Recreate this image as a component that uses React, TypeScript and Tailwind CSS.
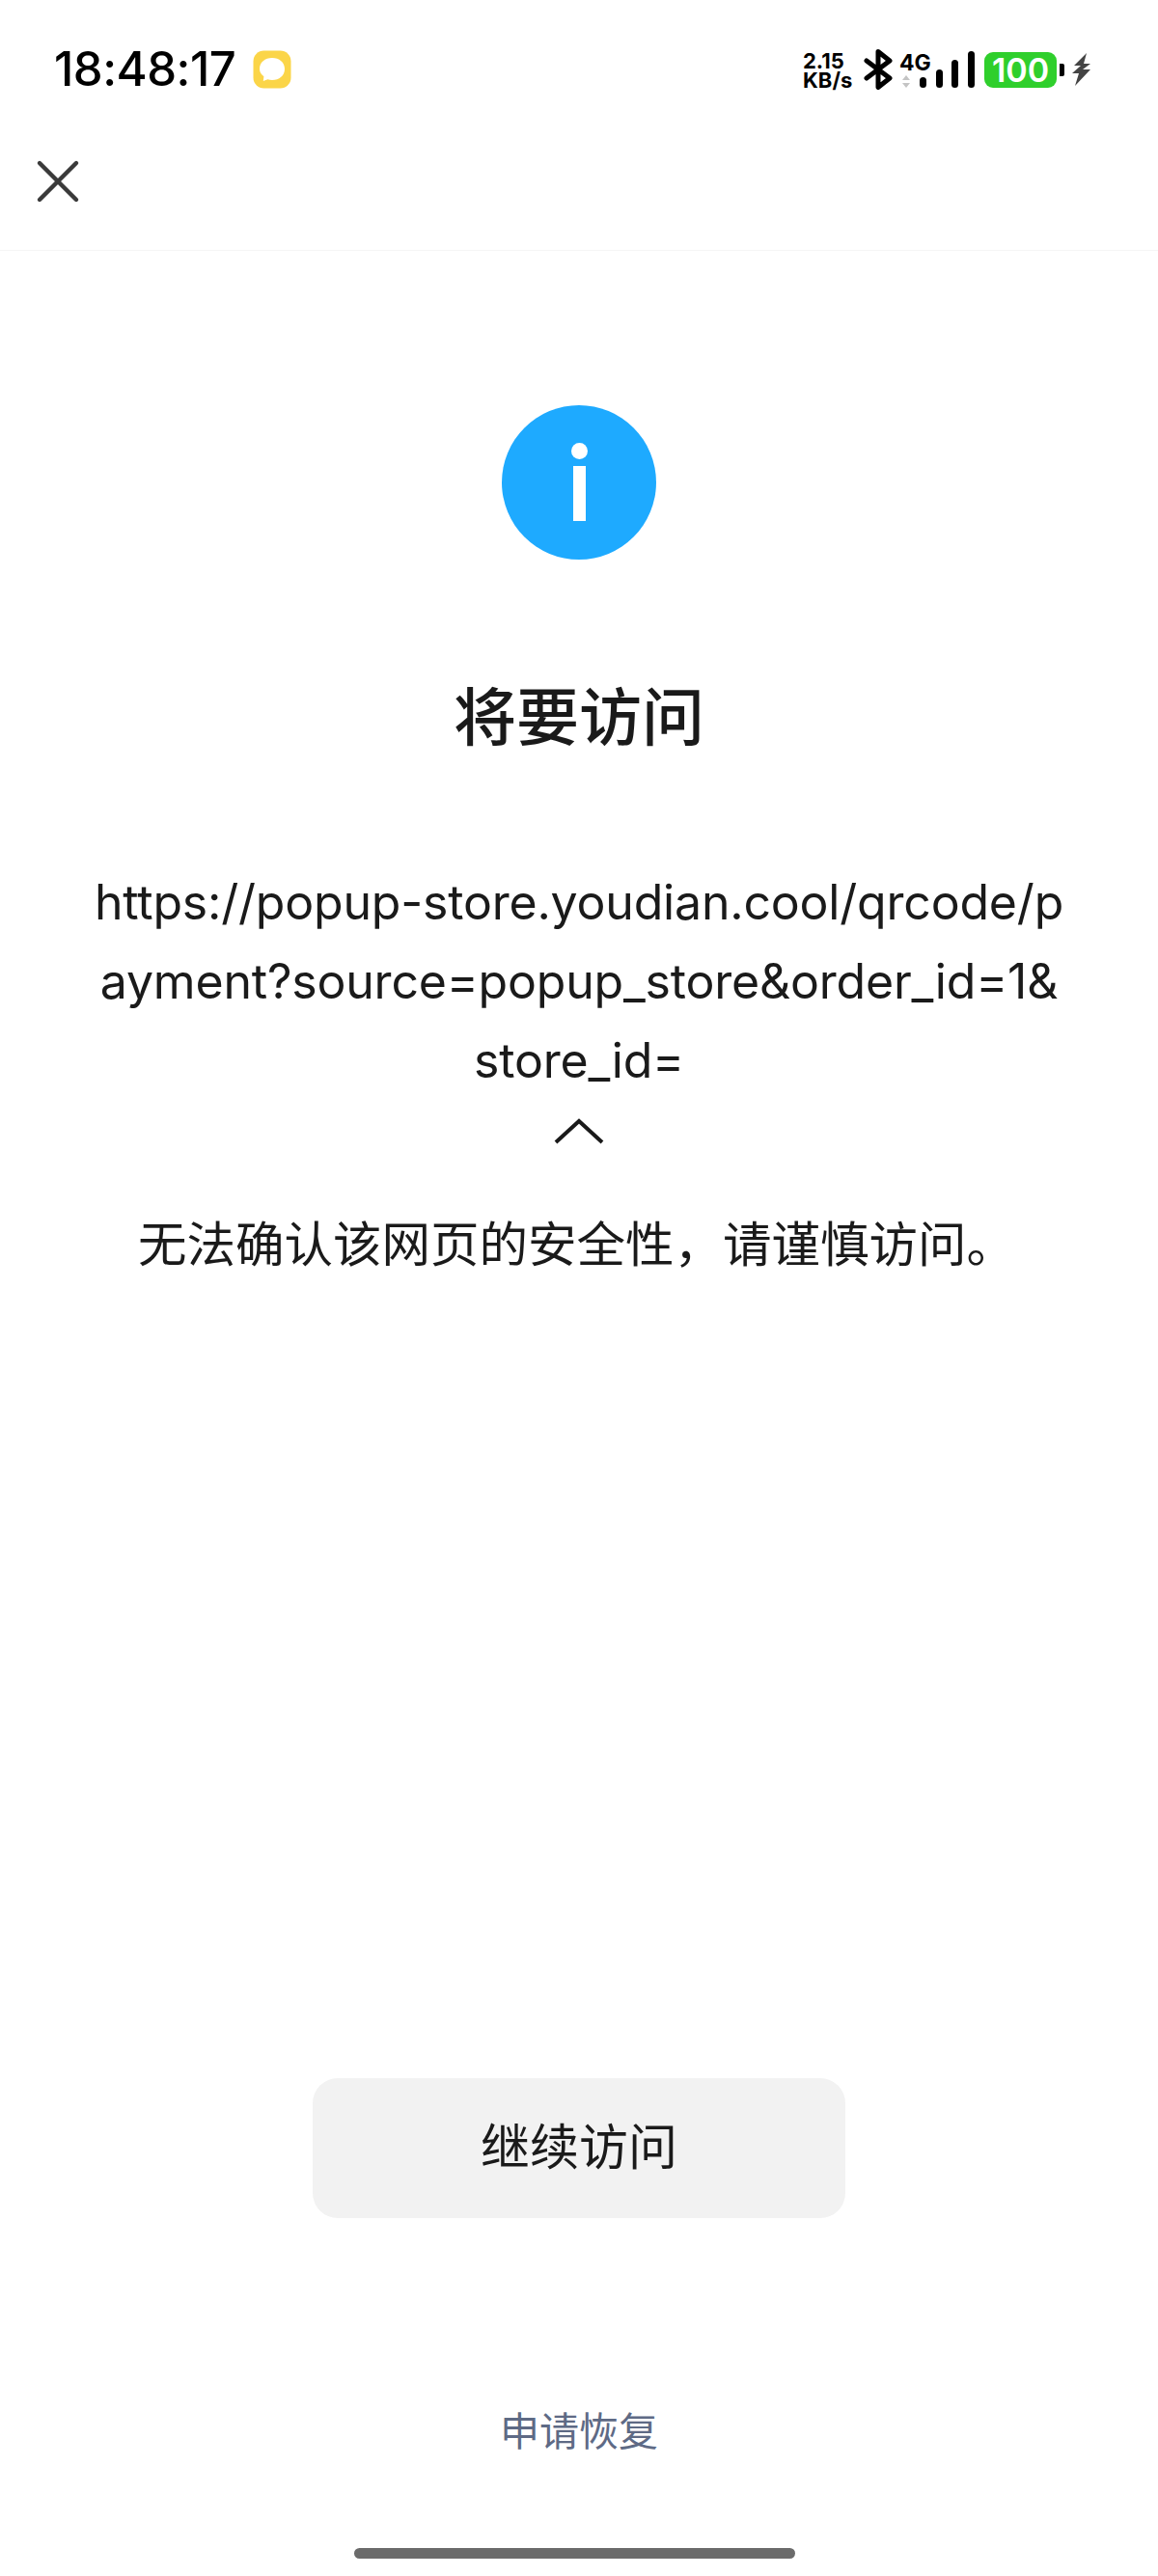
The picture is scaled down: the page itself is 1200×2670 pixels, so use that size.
import { X } from "lucide-react"

const font = { fontFamily: "Inter, 'Noto Sans CJK SC', sans-serif" }

function ChatBadge() {
  return (
    <svg width="40" height="40" viewBox="0 0 40 40" className="ml-[18px]">
      <rect x="0.5" y="0.5" width="39" height="39" rx="11" fill="#fbd548" />
      <path d="M20 8c7.4 0 13 4.700 13 11.500S27.400 31 20 31c-1.600 0-3.200-.2-4.600-.7L10.800 32l.6-4.700C8.600 25.200 7 22.500 7 19.500 7 12.700 12.600 8 20 8z" fill="#fff" />
    </svg>
  )
}

function Bluetooth() {
  return (
    <svg width="30" height="42" viewBox="0 0 30 42" fill="none" stroke="#000" strokeWidth="5" strokeLinecap="round" strokeLinejoin="round">
      <path d="M3 12l24 18-12 9.500V2.500L27 12 3 30" />
    </svg>
  )
}

function Signal() {
  return (
    <svg width="58" height="40" viewBox="0 0 58 40" fill="#000" className="overflow-visible">
      <rect x="0" y="27" width="7" height="11" rx="3.500" />
      <rect x="17" y="19" width="7" height="19" rx="3.500" />
      <rect x="33" y="9" width="7" height="29" rx="3.500" />
      <rect x="50" y="0" width="7" height="38" rx="3.500" />
      <path d="M-14 25l-4 5h8zM-14 38l-4-5h8z" fill="#c4c4c4" />
    </svg>
  )
}

function Bolt() {
  return (
    <svg width="20" height="34" viewBox="0 0 20 34" fill="#444">
      <path d="M15 0L2 13h7L0 21h7l-4 13 16-17h-8l8-6h-7z" />
    </svg>
  )
}

export default function App() {
  return (
    <div className="relative flex h-[2670px] w-[1200px] flex-col bg-white text-[#1a1a1a]" style={font}>
      {/* status bar */}
      <div className="flex h-[144px] items-start justify-between pl-[56px] pr-[69px] pt-[46px]">
        <div className="flex items-center text-black">
          <span className="text-[49px] leading-[52px] font-medium tracking-[-0.5px]">18:48:17</span>
          <ChatBadge />
        </div>
        <div className="mt-[5px] flex items-center text-black">
          <div className="mt-[2px] flex w-[54px] flex-col text-[22px] leading-[20px] font-bold">
            <span>2.15</span>
            <span>KB/s</span>
          </div>
          <div className="ml-[9px]">
            <Bluetooth />
          </div>
          <div className="relative ml-[7px] w-[75px] self-stretch">
            <span className="absolute left-0 top-[2px] text-[23px] leading-[24px] font-bold">4G</span>
            <div className="absolute bottom-0 left-[21px]">
              <Signal />
            </div>
          </div>
          <div className="ml-[13px] flex h-[37px] w-[75px] items-center justify-center rounded-[9px] bg-[#2fcf2c] text-[34px] font-semibold text-white">
            100
          </div>
          <div className="ml-[3px] h-[13px] w-[5px] rounded-r-[2px] bg-black" />
          <div className="ml-[8px]">
            <Bolt />
          </div>
        </div>
      </div>

      {/* nav */}
      <div className="flex h-[116px] items-start border-b border-[#f5f5f5] pl-[22px] pt-[6px]">
        <X size={76} strokeWidth={1.4} color="#3a3a3a" />
      </div>

      {/* content */}
      <div className="flex flex-1 flex-col items-center">
        <div className="mt-[160px] flex h-[160px] w-[160px] flex-col items-center rounded-full bg-[#1eaaff]">
          <div className="mt-[39px] h-[17px] w-[17px] rounded-full bg-white" />
          <div className="mt-[7px] h-[57px] w-[13px] bg-white" />
        </div>
        <h1 className="mt-[120px] text-[65px] leading-[88px] font-medium">将要访问</h1>
        <p className="mt-[106px] w-[1010px] text-center text-[50px] leading-[82px] tracking-[-0.2px] break-all">
          https://popup-store.youdian.cool/qrcode/payment?source=popup_store&amp;order_id=1&amp;store_id=
        </p>
        <svg width="54" height="28" viewBox="0 0 54 28" fill="none" stroke="#1a1a1a" strokeWidth="4" className="mt-[19px]">
          <path d="M3 25L27 3l24 22" />
        </svg>
        <p className="mt-[67px] w-[1010px] pl-[48px] text-[50.500px] leading-[72px]">无法确认该网页的安全性，请谨慎访问。</p>

        <button className="mt-[828px] flex h-[145px] w-[552px] items-center justify-center rounded-[26px] bg-[#f2f2f2] text-[51px]">
          继续访问
        </button>
        <span className="mt-[193px] text-[41px] leading-[56px] text-[#5e6a85]">申请恢复</span>
      </div>

      {/* gesture bar */}
      <div className="mb-[18px] flex justify-center pr-[10px]">
        <div className="h-[11px] w-[457px] rounded-full bg-[#6b6b6b]" />
      </div>
    </div>
  )
}
